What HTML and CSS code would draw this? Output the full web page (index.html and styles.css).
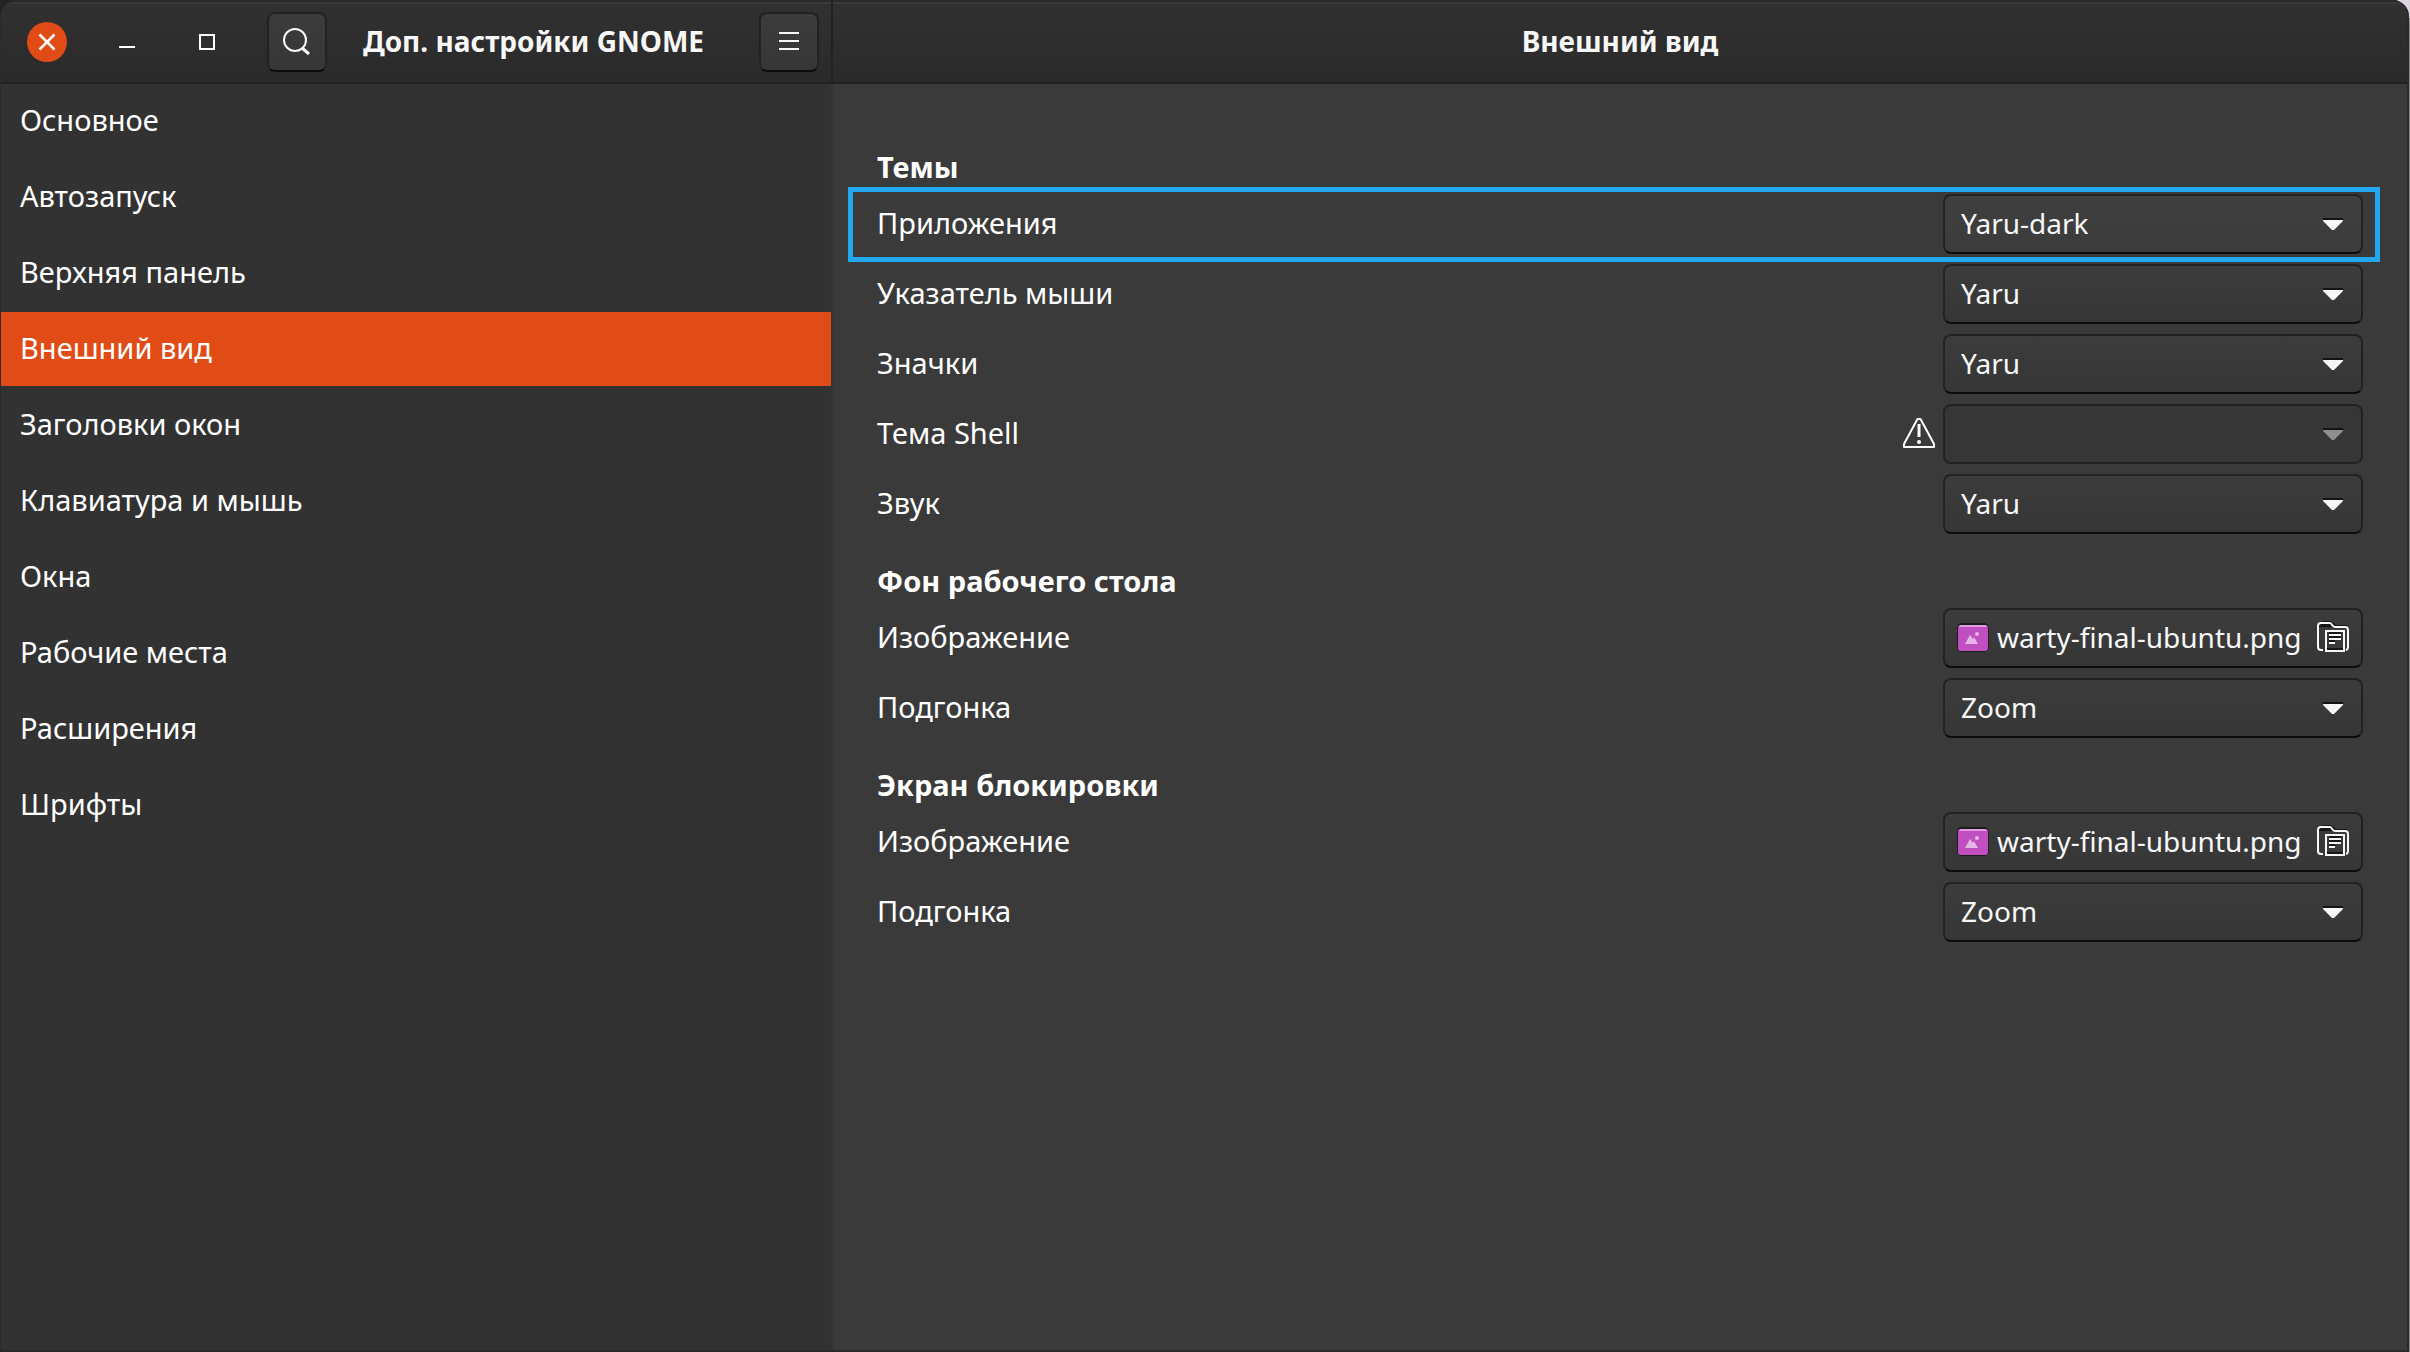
FILE: index.html
```html
<!DOCTYPE html>
<html lang="ru">
<head>
  <meta charset="utf-8">
  <meta name="viewport" content="width=device-width, initial-scale=1">
  <title>Доп. настройки GNOME</title>
  <link rel="stylesheet" href="styles.css">
</head>
<body>
  <svg class="defs" aria-hidden="true">
    <symbol id="arrow" viewBox="0 0 20 14">
      <path class="shade" d="M0 0h20v4H0z"/>
      <path d="M0 2h20v1L11 12H9L0 3z" fill="currentColor"/>
    </symbol>
    <symbol id="picture" viewBox="0 0 32 32">
      <rect x="0" y="2" width="32" height="29" rx="5" fill="#1c1c1c"/>
      <rect x="1" y="4" width="30" height="26" rx="3" fill="#c04fc0"/>
      <path d="M4 4h24a3 3 0 0 1 2 2H2a3 3 0 0 1 2-2z" fill="#e39be3"/>
      <path d="M8 23l5-9 3 4 1-2 4 7z" fill="#e6b5e6"/>
      <circle cx="20" cy="13" r="2" fill="#e6b5e6"/>
    </symbol>
    <symbol id="folder" viewBox="0 0 32 32">
      <path d="M2 2l4-2h8l5 4h11v2H2z" fill="#161616"/>
      <path d="M6 29H4a3 3 0 0 1-3-3V5a3 3 0 0 1 3-3h9c2 0 2 4 5 4h10a3 3 0 0 1 3 3v17a3 3 0 0 1-2 3" fill="none" stroke="currentColor" stroke-width="2"/>
      <rect x="9" y="10" width="18" height="20" fill="#3a3a3a" stroke="currentColor" stroke-width="2"/>
      <path d="M12 12h12M12 16h12M12 20h6M10 28h16" stroke="#161616" stroke-width="2"/>
      <path d="M12 14h12M12 18h12M12 22h6" stroke="currentColor" stroke-width="2"/>
    </symbol>
  </svg>

  <div class="window">
    <header class="titlebar titlebar-side">
      <div class="window-controls">
        <button class="control close" type="button" aria-label="Закрыть">
          <svg width="40" height="40" viewBox="0 0 40 40"><path d="M12.500 12.500l15 15m0-15l-15 15" fill="none" stroke="currentColor" stroke-width="2.500"/></svg>
        </button>
        <button class="control" type="button" aria-label="Свернуть">
          <svg width="40" height="40" viewBox="0 0 40 40"><path d="M12 25h16" stroke="currentColor" stroke-width="2"/></svg>
        </button>
        <button class="control" type="button" aria-label="Развернуть">
          <svg width="40" height="40" viewBox="0 0 40 40"><rect x="13" y="13" width="14" height="14" fill="none" stroke="currentColor" stroke-width="2"/></svg>
        </button>
      </div>
      <button class="button square" type="button" aria-label="Поиск">
        <svg width="32" height="32" viewBox="0 0 32 32" fill="none" stroke="currentColor"><circle cx="14" cy="14" r="11" stroke-width="2"/><path d="M21 22l7 6" stroke-width="3"/></svg>
      </button>
      <h1 class="title app-title">Доп. настройки GNOME</h1>
      <button class="button square" type="button" aria-label="Меню">
        <svg width="32" height="32" viewBox="0 0 32 32"><path d="M6 7h20M6 15h20M6 23h20" stroke="currentColor" stroke-width="2"/></svg>
      </button>
    </header>
    <div class="titlebar titlebar-main">
      <h2 class="title">Внешний вид</h2>
    </div>

    <nav class="sidebar">
      <a class="nav-item" href="#general">Основное</a>
      <a class="nav-item" href="#startup">Автозапуск</a>
      <a class="nav-item" href="#topbar">Верхняя панель</a>
      <a class="nav-item active" href="#appearance" aria-current="page">Внешний вид</a>
      <a class="nav-item" href="#titlebars">Заголовки окон</a>
      <a class="nav-item" href="#input">Клавиатура и мышь</a>
      <a class="nav-item" href="#windows">Окна</a>
      <a class="nav-item" href="#workspaces">Рабочие места</a>
      <a class="nav-item" href="#extensions">Расширения</a>
      <a class="nav-item" href="#fonts">Шрифты</a>
    </nav>

    <main class="content">
      <section class="group">
        <h3 class="group-title">Темы</h3>
        <div class="row highlighted">
          <label class="row-label" for="apps">Приложения</label>
          <div class="picker"><select class="button select hovered" id="apps"><option>Yaru-dark</option></select><svg class="arrow"><use href="#arrow"/></svg></div>
        </div>
        <div class="row">
          <label class="row-label" for="cursor">Указатель мыши</label>
          <div class="picker"><select class="button select" id="cursor"><option>Yaru</option></select><svg class="arrow"><use href="#arrow"/></svg></div>
        </div>
        <div class="row">
          <label class="row-label" for="icons">Значки</label>
          <div class="picker"><select class="button select" id="icons"><option>Yaru</option></select><svg class="arrow"><use href="#arrow"/></svg></div>
        </div>
        <div class="row">
          <label class="row-label" for="shell">Тема Shell</label>
          <svg class="warning" width="32" height="32" viewBox="0 0 32 32" fill="none" stroke="currentColor" stroke-width="2" stroke-linejoin="round"><path d="M14.500 1h3L31 26v3H1v-3z"/><path d="M16 6v13" stroke-width="3"/><circle cx="16" cy="24" r="2" fill="currentColor" stroke="none"/></svg>
          <div class="picker"><select class="button select" id="shell" disabled><option></option></select><svg class="arrow"><use href="#arrow"/></svg></div>
        </div>
        <div class="row">
          <label class="row-label" for="sound">Звук</label>
          <div class="picker"><select class="button select" id="sound"><option>Yaru</option></select><svg class="arrow"><use href="#arrow"/></svg></div>
        </div>
      </section>

      <section class="group">
        <h3 class="group-title">Фон рабочего стола</h3>
        <div class="row">
          <label class="row-label" for="bg-image">Изображение</label>
          <button class="button file" id="bg-image" type="button"><svg class="icon"><use href="#picture"/></svg><span class="file-name">warty-final-ubuntu.png</span><svg class="icon"><use href="#folder"/></svg></button>
        </div>
        <div class="row">
          <label class="row-label" for="bg-fit">Подгонка</label>
          <div class="picker"><select class="button select" id="bg-fit"><option>Zoom</option></select><svg class="arrow"><use href="#arrow"/></svg></div>
        </div>
      </section>

      <section class="group">
        <h3 class="group-title">Экран блокировки</h3>
        <div class="row">
          <label class="row-label" for="lock-image">Изображение</label>
          <button class="button file" id="lock-image" type="button"><svg class="icon"><use href="#picture"/></svg><span class="file-name">warty-final-ubuntu.png</span><svg class="icon"><use href="#folder"/></svg></button>
        </div>
        <div class="row">
          <label class="row-label" for="lock-fit">Подгонка</label>
          <div class="picker"><select class="button select" id="lock-fit"><option>Zoom</option></select><svg class="arrow"><use href="#arrow"/></svg></div>
        </div>
      </section>
    </main>
  </div>
</body>
</html>
```
FILE: styles.css
```css
* {
  box-sizing: border-box;
}

body {
  margin: 0;
  padding-right: 1px;
  color: #fff;
  font: 29px/34px "Noto Sans", sans-serif;
  background:
    linear-gradient(#dad4de 18px, #8d8d8d 18px) right top / 13px 100% no-repeat,
    #242424;
}

.defs {
  display: none;
}

.shade {
  fill: #141414;
}

.window {
  display: grid;
  grid-template: 82px 1fr / 832px 1fr;
  min-height: 100vh;
  border: 2px solid #2a2a2a;
  border-left-width: 1px;
  border-radius: 16px 16px 0 0;
  background: #3a3a3a;
  overflow: hidden;
}

/* Title bars */

.titlebar {
  display: flex;
  align-items: center;
  border-bottom: 2px solid #222;
  background: linear-gradient(#3a3a3a 2px, #313131 2px, #2a2a2a);
}

.titlebar-side {
  padding: 0 12px 0 26px;
  border-right: 2px solid #222;
}

.titlebar-main {
  justify-content: center;
}

.title {
  margin: 0;
  padding-bottom: 2px;
  color: #f7f7f7;
  font-size: 28px;
  font-weight: 700;
}

.app-title {
  flex: 1;
  padding-left: 36px;
}

.window-controls {
  display: flex;
  gap: 40px;
  margin-right: 40px;
}

.control {
  width: 40px;
  height: 40px;
  padding: 0;
  border: 0;
  border-radius: 50%;
  color: #fff;
  background: none;
}

.control svg {
  display: block;
}

.close {
  background: #e04b16;
}

.button {
  height: 60px;
  border: 2px solid #222;
  border-bottom-color: #0c0c0c;
  border-radius: 8px;
  color: #f7f7f7;
  font: inherit;
  font-size: 28px;
  background: linear-gradient(#3c3c3c, #363636);
}

.square {
  display: flex;
  align-items: center;
  justify-content: center;
  width: 60px;
  padding: 0;
}

/* Sidebar */

.sidebar {
  display: flex;
  flex-direction: column;
  gap: 2px;
  border-right: 2px solid #353535;
  background: #323232;
}

.nav-item {
  padding: 19px 19px 21px;
  color: #fff;
  text-decoration: none;
}

.active {
  background: #e04b16;
}

/* Settings */

.content {
  display: flex;
  flex-direction: column;
  gap: 30px;
  padding: 66px 44px;
}

.group {
  display: flex;
  flex-direction: column;
  gap: 10px;
}

.group-title {
  margin: 0;
  font-size: 29px;
  font-weight: 700;
}

.row {
  position: relative;
  display: flex;
  align-items: center;
  gap: 8px;
}

.row-label {
  flex: 1;
  padding-bottom: 2px;
}

.highlighted::after {
  content: "";
  position: absolute;
  inset: -7px -17px -8px -29px;
  border: 5px solid #22a7f2;
  pointer-events: none;
}

.picker {
  position: relative;
  width: 420px;
}

.select {
  display: block;
  width: 100%;
  padding: 0 60px 2px 16px;
  appearance: none;
}

.hovered {
  background: linear-gradient(#3f3f3f, #3c3c3c);
}

.select:disabled {
  border-color: #222;
  background: #363636;
  opacity: 1;
}

.arrow {
  position: absolute;
  top: 24px;
  right: 20px;
  width: 20px;
  height: 14px;
  color: #f7f7f7;
  pointer-events: none;
}

.select:disabled + .arrow {
  color: #8f8f8f;
}

.select:disabled + .arrow .shade {
  fill: none;
}

.file {
  display: flex;
  align-items: center;
  gap: 8px;
  width: 420px;
  padding: 0 12px 2px;
  text-align: left;
}

.file-name {
  flex: 1;
}

.icon {
  flex: none;
  width: 32px;
  height: 32px;
}
```
